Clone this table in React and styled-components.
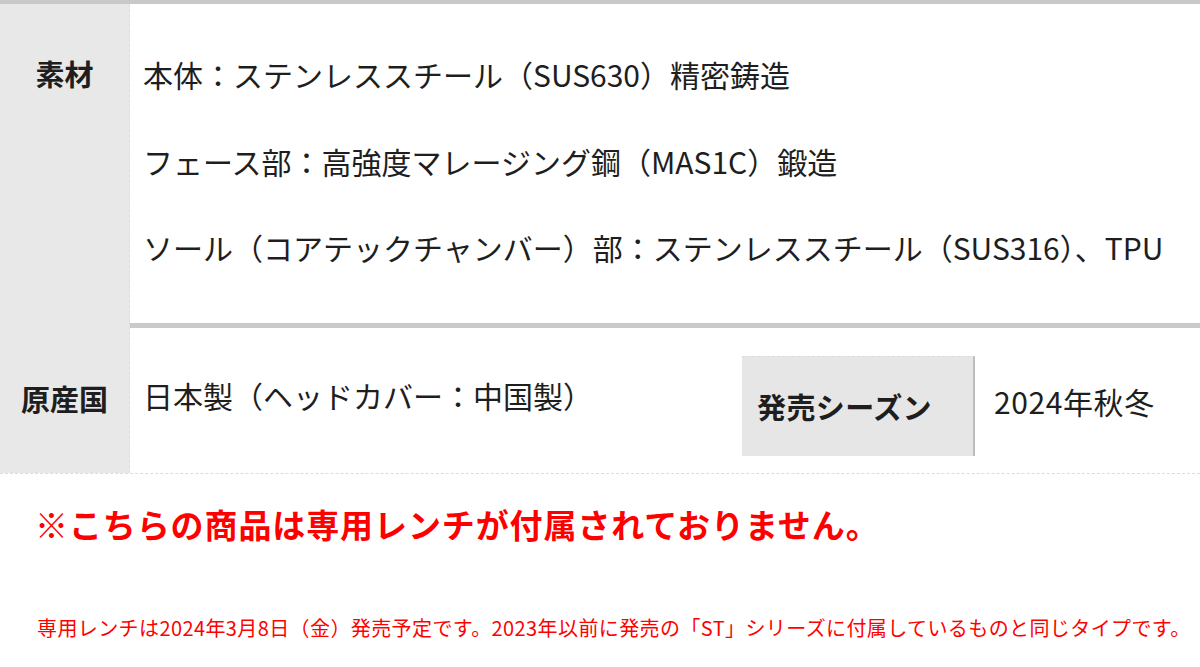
import React from 'react';
import styled, { createGlobalStyle } from 'styled-components';

const GlobalStyle = createGlobalStyle`
    html, body {
        margin:0;
        padding:0;
        background:#fff;
    }
    body {
        font-family:"Noto Sans CJK JP", "Noto Sans", sans-serif;
        color:#1e1e1e;
    }
`;

const Page = styled.div`
    width:1200px;
    height:667px;
    overflow:hidden;
`;

const SpecTable = styled.div`
    border-top:4px solid #c9c9c9;
    border-bottom:1px dashed #dcdcdc;
`;

const Row = styled.div`
    display:grid;
    grid-template-columns:130px 1fr;
    height:${props => props.h}px;
    border-top:${props => props.divided ? '5px solid #cacaca' : 'none'};
`;

const Label = styled.div`
    background:#e8e8e8;
    border-right:1px dashed #dedede;
    display:flex;
    justify-content:center;
    align-items:${props => props.top ? 'flex-start' : 'center'};
    padding-top:${props => props.top ? '26px' : '0'};
    margin-top:${props => props.top ? '0' : '-6px'};
    font-size:29px;
    font-weight:700;
    line-height:86px;
`;

const Lines = styled.div`
    padding-left:13px;
    padding-bottom:5px;
    display:flex;
    flex-direction:column;
    justify-content:center;
    font-size:30px;
    line-height:86.5px;
    white-space:nowrap;
`;

const Inline = styled.div`
    padding-left:13px;
    display:flex;
    align-items:center;
    font-size:30px;
    white-space:nowrap;
`;

const Origin = styled.span`
    width:599px;
    margin-top:-12px;
`;

const SeasonLabel = styled.div`
    width:233px;
    height:100px;
    margin-top:10px;
    background:#e6e6e6;
    border-top:1px dashed #dcdcdc;
    border-right:2px solid #bdbdbd;
    box-sizing:border-box;
    display:flex;
    align-items:center;
    padding-left:15px;
    font-weight:700;
    font-size:29px;
    letter-spacing:0.4px;
`;

const SeasonValue = styled.span`
    margin-left:19px;
    letter-spacing:0.6px;
`;

const Notice = styled.div`
    color:#f00;
    font-weight:700;
    font-size:33px;
    letter-spacing:0.9px;
    padding-left:35px;
    margin-top:26px;
    line-height:48px;
    white-space:nowrap;
`;

const Note = styled.div`
    color:#f00;
    font-size:20px;
    letter-spacing:0.4px;
    padding-left:37px;
    margin-top:65px;
    line-height:30px;
    white-space:nowrap;
`;

const materials = [
    '本体：ステンレススチール（SUS630）精密鋳造',
    'フェース部：高強度マレージング鋼（MAS1C）鍛造',
    'ソール（コアテックチャンバー）部：ステンレススチール（SUS316）、TPU',
];

const App = () => (
    <Page>
        <GlobalStyle />
        <SpecTable>
            <Row h={319}>
                <Label top>素材</Label>
                <Lines>
                    { materials.map(line => <span key={line}>{line}</span>) }
                </Lines>
            </Row>
            <Row h={145} divided>
                <Label>原産国</Label>
                <Inline>
                    <Origin>日本製（ヘッドカバー：中国製）</Origin>
                    <SeasonLabel>発売シーズン</SeasonLabel>
                    <SeasonValue>2024年秋冬</SeasonValue>
                </Inline>
            </Row>
        </SpecTable>
        <Notice>※こちらの商品は専用レンチが付属されておりません。</Notice>
        <Note>専用レンチは2024年3月8日（金）発売予定です。2023年以前に発売の「ST」シリーズに付属しているものと同じタイプです。</Note>
    </Page>
);

export default App;
